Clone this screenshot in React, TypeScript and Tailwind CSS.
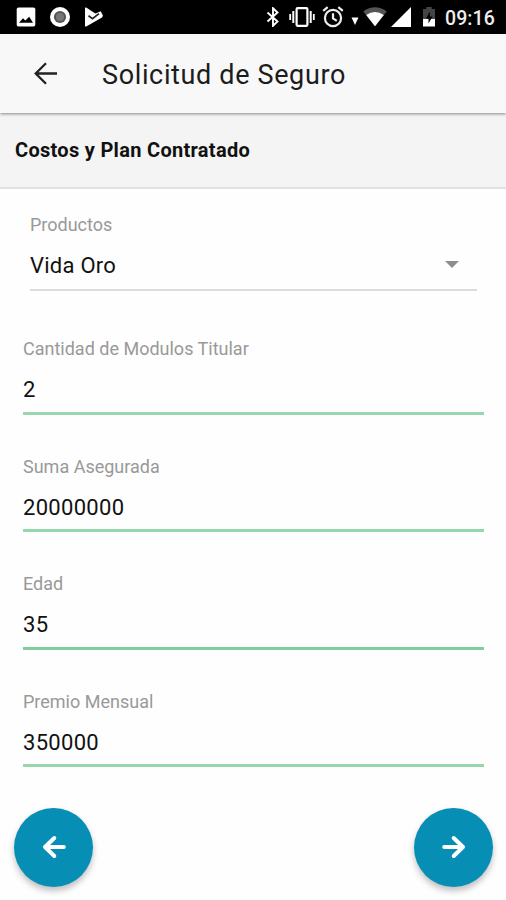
const fields = [
    { label: "Cantidad de Modulos Titular", value: "2", line: "border-[#99d7b0]", height: "h-[124px]", gap: "mb-[8px]" },
    { label: "Suma Asegurada", value: "20000000", line: "border-[#94d8ae]", height: "h-[117px]", gap: "mb-[7px]" },
    { label: "Edad", value: "35", line: "border-[#82cda0]", height: "h-[118px]", gap: "mb-[8px]" },
    { label: "Premio Mensual", value: "350000", line: "border-[#99d7ab]", height: "h-[117px]", gap: "mb-[7px]" },
];

function StatusBar() {
    return (
        <div className="h-[34px] bg-black flex items-center justify-between pl-4 pr-[10px]">
            <div className="flex items-center">
                <svg className="w-5 h-5" viewBox="0 0 20 20">
                    <rect x="0.7" y="0.5" width="18.6" height="19" rx="1.8" fill="#fff" />
                    <path d="M3 15.8 7 11.2l2.3 2.3 3.9-3.7 3.8 6z" fill="#000" />
                </svg>
                <svg className="w-[22px] h-[22px] ml-[13px]" viewBox="0 0 22 22">
                    <circle cx="11" cy="11" r="10" fill="#fff" />
                    <circle cx="11" cy="11" r="6.1" fill="#555" />
                    <circle cx="11" cy="11" r="4" fill="#777" />
                </svg>
                <svg className="w-5 h-5 ml-[13px]" viewBox="0 0 20 20">
                    <path d="M1 1.2q0-1.2 1.2-.6L9 5l2.5 1.5 5.2-2.2 2.3 4.5-1 1.6L2.2 19.4q-1.2.6-1.2-.7z" fill="#fff" />
                    <path d="m4.5 8.8 4 2.8 6.5-5" fill="none" stroke="#222" strokeWidth="1.7" />
                </svg>
            </div>
            <div className="flex items-center">
                <svg className="w-[14px] h-5" viewBox="0 0 14 20" fill="none" stroke="#fff" strokeWidth="1.9">
                    <path d="m1.5 5.5 10 9-4.5 4.3V1.2l4.5 4.3-10 9" />
                </svg>
                <svg className="w-[26px] h-5 ml-[9px]" viewBox="0 0 26 20" fill="none" stroke="#fff">
                    <rect x="7.6" y="1.2" width="10.8" height="17.6" rx="1" strokeWidth="2.2" />
                    <path d="M4.3 4v12M21.7 4v12" strokeWidth="2" />
                    <path d="M1.2 7v6M24.8 7v6" strokeWidth="1.8" />
                </svg>
                <svg className="w-[22px] h-[22px] ml-[7px]" viewBox="0 0 22 22" fill="none" stroke="#eee" strokeWidth="2.2">
                    <circle cx="11" cy="12" r="8.1" />
                    <path d="M11 7.2v5.2l3.8 2.5M1.2 4.8 5.7 1.2M20.8 4.8l-4.5-3.6" />
                </svg>
                <svg className="w-2 h-2 ml-[7px] mt-[8px]" viewBox="0 0 8 8">
                    <path d="M.5.5h7L4 8z" fill="#fff" />
                </svg>
                <svg className="w-6 h-5 ml-[4px]" viewBox="0 0 24 20">
                    <path d="M.3 4.4Q12-3.8 23.7 4.4L12 19.3z" fill="#555" />
                    <path d="M3.2 8Q12 1.8 20.8 8L12 19.3z" fill="#fff" />
                </svg>
                <svg className="w-5 h-5 ml-[4px]" viewBox="0 0 20 20">
                    <path d="M20 0v20H0z" fill="#fff" />
                </svg>
                <svg className="w-[14px] h-5 ml-[11px]" viewBox="0 0 14 20">
                    <path d="M4.2 0h5.6v2H13v10.5H1V2h3.2z" fill="#444" />
                    <path d="M1 12h12v7.5H1z" fill="#fff" />
                    <path d="M7.8 4.5 4 11.5h2.5v5l4-7H7.8z" fill="#000" />
                </svg>
                <span className="ml-[9px] mt-[3px] w-[51px] text-[19.5px] leading-none font-medium tracking-[0.1px] text-[#eee] whitespace-nowrap">09:16</span>
            </div>
        </div>
    );
}

function ArrowButton({ flipped = false }: { flipped?: boolean }) {
    return (
        <button
            aria-label={flipped ? "Siguiente" : "Anterior"}
            className="size-[79px] rounded-full bg-[#078eb5] flex items-center justify-center shadow-[0_4px_6px_rgba(0,0,0,0.25)]"
        >
            <svg className={flipped ? "w-6 h-6 rotate-180" : "w-6 h-6"} viewBox="0 0 24 24" fill="none" stroke="#fff" strokeWidth="4" strokeLinecap="round">
                <path d="M21.8 12H3M12.3 3 3 12l9.3 9" strokeLinejoin="round" />
            </svg>
        </button>
    );
}

export default function App() {
    return (
        <div className="w-[506px] h-[900px] overflow-hidden bg-[#fefefe] font-['Roboto',sans-serif] text-[#111] flex flex-col">
            <StatusBar />

            <header className="relative h-[79px] shrink-0 bg-[#f8f8f8] flex items-center pl-[34px] shadow-[0_1px_3px_rgba(0,0,0,0.45)]">
                <svg className="w-[23px] h-[23px]" viewBox="0 0 23 23" fill="none" stroke="#222" strokeWidth="2.3">
                    <path d="M23 11.5H2M12 1.2 1.7 11.5 12 21.8" />
                </svg>
                <h1 className="ml-[45px] mt-[2px] text-[27px] leading-8 tracking-[0.64px] text-[#1c1c1c] whitespace-nowrap">Solicitud de Seguro</h1>
            </header>

            <div className="h-[76px] shrink-0 bg-[#f4f4f4] border-b-2 border-[#e1e1e1] pl-[15px] pt-[23px]">
                <h2 className="text-[20px] leading-7 font-bold tracking-[0.3px] text-[#111]">Costos y Plan Contratado</h2>
            </div>

            <div className="h-[102px] shrink-0 ml-[30px] mr-[29px] border-b-2 border-[#dcdcdc] flex flex-col justify-end">
                <div className="text-[18px] leading-5 text-[#999]">Productos</div>
                <div className="mt-[17px] mb-[9px] h-7 flex items-center justify-between pr-[18px]">
                    <span className="text-[22px] leading-7 tracking-[0.25px]">Vida Oro</span>
                    <svg className="w-[14px] h-[7px] -mt-[3px]" viewBox="0 0 14 7">
                        <path d="M0 0h14L7 7z" fill="#8d8d8d" />
                    </svg>
                </div>
            </div>

            {fields.map((field) => (
                <div
                    key={field.label}
                    className={`${field.height} ${field.line} shrink-0 ml-[23px] mr-[22px] border-b-3 flex flex-col justify-end`}
                >
                    <div className="text-[18px] leading-5 text-[#999]">{field.label}</div>
                    <div className={`mt-[17px] ${field.gap} text-[22px] leading-7 tracking-[0.31px]`}>{field.value}</div>
                </div>
            ))}

            <div className="mt-[40.5px] pl-[14px] pr-[13px] flex justify-between">
                <ArrowButton />
                <ArrowButton flipped />
            </div>
        </div>
    );
}
